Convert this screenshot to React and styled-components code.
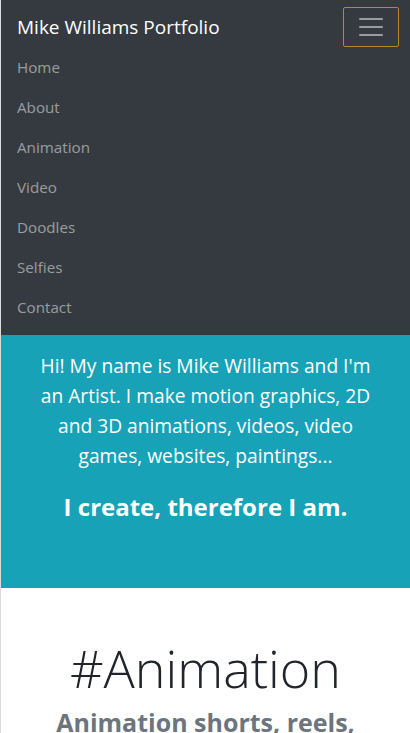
import React from 'react'
import styled, { createGlobalStyle } from 'styled-components'

const GlobalStyle = createGlobalStyle`
  html, body {
    margin: 0;
    padding: 0;
    background: #fff;
  }
  body {
    font-family: "Open Sans", "Noto Sans", "Liberation Sans", sans-serif;
    font-size: 16px;
    line-height: 1.5;
    color: #212529;
  }
  * {
    box-sizing: border-box;
  }
`

const links = ['Home', 'About', 'Animation', 'Video', 'Doodles', 'Selfies', 'Contact']

const Page = styled.div`
  border-left: 1px solid #dcdcdc;
  min-height: 733px;
  overflow: hidden;
`

const Navbar = styled.nav`
  background: #343a40;
  padding: 7px 11px 8px 16px;
`

const NavTop = styled.div`
  display: flex;
  align-items: center;
  justify-content: space-between;
  height: 40px;
`

const Brand = styled.a`
  color: #fff;
  font-size: 19px;
  line-height: 30px;
  text-decoration: none;
  white-space: nowrap;
`

const Toggler = styled.button`
  width: 56px;
  height: 40px;
  background: transparent;
  border: 1px solid #b8862b;
  border-radius: 2px;
  padding: 0;
  display: flex;
  align-items: center;
  justify-content: center;
`

const NavList = styled.ul`
  list-style: none;
  margin: 0;
  padding: 0;
`

const NavLink = styled.li`
  color: rgba(255, 255, 255, 0.5);
  font-size: 15.2px;
  line-height: 24px;
  padding: 8px 0;
`

const Jumbotron = styled.section`
  background: #17a2b8;
  color: #fff;
  text-align: center;
  padding: 16px 16px 67px;
`

const Lead = styled.p`
  margin: 0 0 21px;
  font-size: 19.2px;
  line-height: 30px;
`

const Motto = styled.h4`
  margin: 0;
  font-size: 24px;
  font-weight: 700;
  line-height: 29px;
`

const Section = styled.section`
  text-align: center;
  padding: 44px 16px 0;
`

const Display = styled.h1`
  margin: 0;
  font-size: 52px;
  font-weight: 300;
  line-height: 72px;
  color: #212529;
`

const Subtitle = styled.h3`
  margin: 0;
  font-size: 25px;
  font-weight: 700;
  line-height: 36px;
  color: #6c757d;
`

const MenuIcon = () => (
  <svg width="30" height="30" viewBox="0 0 30 30">
    <path
      d="M4 7h22M4 15h22M4 23h22"
      stroke="rgba(255,255,255,0.5)"
      strokeWidth="2"
      strokeLinecap="round"
    />
  </svg>
)

export default function App() {
  return (
    <Page>
      <GlobalStyle />
      <Navbar>
        <NavTop>
          <Brand href="#">Mike Williams Portfolio</Brand>
          <Toggler aria-label="Toggle navigation">
            <MenuIcon />
          </Toggler>
        </NavTop>
        <NavList>
          {links.map(l => (
            <NavLink key={l}>{l}</NavLink>
          ))}
        </NavList>
      </Navbar>
      <Jumbotron>
        <Lead>
          Hi! My name is Mike Williams and I'm<br />
          an Artist. I make motion graphics, 2D<br />
          and 3D animations, videos, video<br />
          games, websites, paintings...
        </Lead>
        <Motto>I create, therefore I am.</Motto>
      </Jumbotron>
      <Section>
        <Display>#Animation</Display>
        <Subtitle>Animation shorts, reels,</Subtitle>
      </Section>
    </Page>
  )
}
